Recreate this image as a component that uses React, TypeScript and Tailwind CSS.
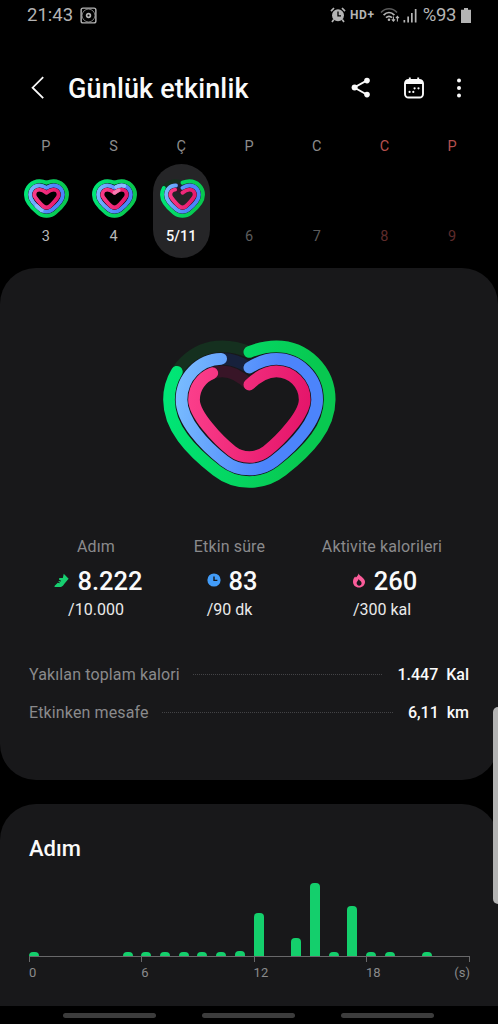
import { useId } from "react";

type Tail = { from: number; length: number };

type Day = {
  letter: string;
  date: string;
  fill?: number[];
  tails?: (Tail | null)[];
  selected?: boolean;
  weekend?: boolean;
};

const DAYS: Day[] = [
  { letter: "P", date: "3", fill: [100, 100, 100], tails: [null, { from: 55, length: 7 }, null] },
  { letter: "S", date: "4", fill: [100, 100, 100], tails: [null, { from: 2, length: 9 }, { from: 0, length: 7 }] },
  { letter: "Ç", date: "5/11", fill: [82, 92, 87], selected: true },
  { letter: "P", date: "6" },
  { letter: "C", date: "7" },
  { letter: "C", date: "8", weekend: true },
  { letter: "P", date: "9", weekend: true },
];

// bar height in px for every hour of the day
const STEPS = [4, 0, 0, 0, 0, 4, 4, 4, 4, 4, 4, 5, 43, 0, 18, 73, 4, 50, 4, 4, 0, 4, 0, 0];

const BIG = [
  { r: 160, start: 80 },
  { r: 122.5, start: 127 },
  { r: 85, start: 178 },
];
const SMALL = [
  { r: 155, start: 84 },
  { r: 107, start: 143 },
  { r: 59, start: 200 },
];

const TRACKS = ["#15301f", "#17213c", "#381527"];
const FROM = ["#00e676", "#7cc0ff", "#ff4590"];
const TO = ["#08c850", "#4c84fb", "#e4156a"];
const LIGHT = ["#5cf0a4", "#86bdff", "#f77bb0"];

function heartPath({ r, start }: { r: number; start: number }) {
  const top = 223 - r;
  const lift = start - (start - top) * 0.58;
  // where the slanted sides meet the round bottom
  const dx = 0.616 * r;
  const dy = 310 + 0.788 * r;
  const side = 223 + 0.52 * r;
  const cx = dx + 0.5 * r;
  const cy = dy - 0.391 * r;
  return [
    `M298 ${start}`,
    `C322 ${lift} 350 ${top} 379 ${top}`,
    `A${r} ${r} 0 0 1 ${379 + r} 223`,
    `C${379 + r} ${side} ${298 + cx} ${cy} ${298 + dx} ${dy}`,
    `A${r} ${r} 0 0 1 ${298 - dx} ${dy}`,
    `C${298 - cx} ${cy} ${217 - r} ${side} ${217 - r} 223`,
    `A${r} ${r} 0 0 1 217 ${top}`,
    `C246 ${top} 274 ${lift} 298 ${start}`,
  ].join(" ");
}

type HeartProps = { fill: number[]; tails?: (Tail | null)[]; small?: boolean; className: string };

function Heart({ fill, tails, small, className }: HeartProps) {
  const id = useId();
  const rings = small ? SMALL : BIG;
  const stroke = small ? 45 : 35;
  return (
    <svg viewBox="39 44 518 444" className={className} fill="none" strokeWidth={stroke} strokeLinecap="round">
      {rings.map((ring, i) => {
        const tail = tails?.[i];
        return (
          <g key={i}>
            <linearGradient id={id + i} gradientUnits="userSpaceOnUse" x1="60" y1="170" x2="480" y2="240">
              <stop offset="0" stopColor={FROM[i]} />
              <stop offset={i === 1 ? "0.75" : "1"} stopColor={TO[i]} />
            </linearGradient>
            <path d={heartPath(ring)} stroke={TRACKS[i]} strokeLinecap="butt" />
            <path
              d={heartPath(ring)}
              stroke={`url(#${id + i})`}
              pathLength={100}
              strokeDasharray={fill[i] < 100 ? `${fill[i]} 200` : undefined}
            />
            {tail && (
              <path
                d={heartPath(ring)}
                stroke={LIGHT[i]}
                pathLength={100}
                strokeDasharray={`${tail.length} 200`}
                strokeDashoffset={-tail.from}
              />
            )}
          </g>
        );
      })}
    </svg>
  );
}

function StatusBar() {
  return (
    <div className="flex h-[30px] items-center pl-[27px] pr-[27px] text-[#b4b4b4]">
      <span className="text-[18.5px] leading-none">21:43</span>
      <svg viewBox="0 0 18 18" className="ml-[7px] h-[17px] w-[17px]" fill="none" stroke="currentColor" strokeWidth="1.5">
        <rect x="1.2" y="1.2" width="15.6" height="15.6" rx="2" />
        <circle cx="9" cy="9" r="6.8" strokeWidth="1" opacity=".7" />
        <circle cx="9" cy="9" r="2" strokeWidth="1.8" />
      </svg>
      <div className="flex-1" />
      <svg viewBox="0 0 16 16" className="h-[16px] w-[16px]">
        <circle cx="8" cy="8.3" r="6" fill="currentColor" />
        <path d="M1 4.2L4 1M15 4.2L12 1M3.8 12.5L2 15M12.2 12.5L14 15" stroke="currentColor" strokeWidth="1.7" />
        <path d="M8 4.5V8.8H11" fill="none" stroke="#000" strokeWidth="1.3" />
      </svg>
      <span className="ml-[4px] text-[12px] leading-none font-bold tracking-[0.7px]">HD+</span>
      <svg viewBox="0 0 20 16" className="ml-[5px] h-[16px] w-[20px]" fill="none" stroke="currentColor">
        <path d="M1 5.5C5.5 .6 12.5 .6 17 5.5" strokeWidth="1.5" opacity=".5" />
        <path d="M3.6 8.2C7 4.6 11 4.6 14.4 8.2" strokeWidth="1.7" />
        <path d="M6 10.7C8 8.8 10 8.8 12 10.7" strokeWidth="1.7" />
        <circle cx="9" cy="12.8" r="1.3" fill="currentColor" stroke="none" />
        <path d="M13.4 9.5V14M11.8 12.4L13.4 14.2L15 12.4M17.4 14.5V9.8M15.9 11.2L17.4 9.4L18.9 11.2" strokeWidth="1.1" />
      </svg>
      <svg viewBox="0 0 14 15" className="ml-[3px] h-[15px] w-[14px]" fill="currentColor">
        <path d="M.5 12H2.2V14.5H.5zM4.3 8.5H6V14.5H4.3zM8 5H9.7V14.5H8zM11.8 1H13.5V14.5H11.8z" />
      </svg>
      <span className="ml-[6px] text-[18.5px] leading-none tracking-[-0.4px]">%93</span>
      <svg viewBox="0 0 10 15" className="ml-[5px] h-[15px] w-[10px]" fill="currentColor">
        <path d="M3 0H7V1.8H10V15H0V1.8H3z" />
      </svg>
    </div>
  );
}

function Header() {
  return (
    <header className="flex h-[116px] items-center pl-[31px] pr-[36px] text-[#fafafa]">
      <svg viewBox="0 0 14 24" className="h-[24px] w-[14px]" fill="none" stroke="currentColor" strokeWidth="1.8">
        <path d="M12.2 1.2L1.6 11.7L12.2 22.2" />
      </svg>
      <h1 className="ml-[23px] pt-[2px] text-[27px] leading-none font-medium tracking-[0.15px]">Günlük etkinlik</h1>
      <div className="flex-1" />
      <svg viewBox="0 0 20 22" className="h-[22px] w-[20px]" fill="currentColor">
        <path d="M16.5 3.2L3.3 10.5L16.5 18" fill="none" stroke="currentColor" strokeWidth="1.9" />
        <circle cx="16" cy="3.6" r="2.8" />
        <circle cx="3.6" cy="10.5" r="3" />
        <circle cx="16" cy="17.6" r="2.8" />
      </svg>
      <svg viewBox="0 0 22 22" className="ml-[32px] h-[22px] w-[22px]" fill="none" stroke="currentColor">
        <rect x="2" y="3" width="18" height="17.5" rx="3.5" strokeWidth="1.9" />
        <path d="M2 5.5C2 4 3 3 5 3H17C19 3 20 4 20 5.5V7H2z" fill="currentColor" stroke="none" />
        <path d="M6.8 .5V4M15.2 .5V4" strokeWidth="1.9" />
        <g fill="currentColor" stroke="none">
          <circle cx="11.6" cy="11.3" r="1.1" />
          <circle cx="15.5" cy="11.3" r="1.1" />
          <circle cx="6.6" cy="14.9" r="1.1" />
          <circle cx="10.3" cy="14.9" r="1.1" />
        </g>
      </svg>
      <svg viewBox="0 0 6 20" className="ml-[31px] h-[20px] w-[6px]" fill="currentColor">
        <circle cx="3" cy="2.4" r="2" />
        <circle cx="3" cy="10" r="2" />
        <circle cx="3" cy="17.6" r="2" />
      </svg>
    </header>
  );
}

function WeekStrip() {
  return (
    <div className="grid h-[132px] grid-cols-7 px-3 pt-[9px]">
      {DAYS.map((d) => (
        <div key={d.date} className="-mt-[16px] flex flex-col items-center">
          <span className={`text-[14.5px] leading-4 ${d.weekend ? "text-[#b5504f]" : "text-[#8c8c8c]"}`}>{d.letter}</span>
          <div
            className={`mt-[9px] flex h-[94px] w-[57px] flex-col items-center rounded-full pt-[14px] ${
              d.selected ? "bg-[#252527]" : ""
            }`}
          >
            {d.fill ? (
              <Heart small fill={d.fill} tails={d.tails} className="ml-[2px] h-[41px] w-[45px]" />
            ) : (
              <div className="h-[41px]" />
            )}
            <span
              className={`mt-[10px] text-[14.5px] leading-4 whitespace-nowrap ${
                d.selected
                  ? "font-medium text-[#fafafa]"
                  : d.fill
                    ? "text-[#b8b8b8]"
                    : d.weekend
                      ? "text-[#5e2b2b]"
                      : "text-[#5c5c5c]"
              }`}
            >
              {d.date}
            </span>
          </div>
        </div>
      ))}
    </div>
  );
}

function ShoeIcon() {
  return (
    <svg viewBox="0 0 16 16" className="h-[15px] w-[15px]">
      <path
        d="M10.4 .8L15.6 6L12.4 9.8C10 12.6 9.2 15 6 15H1.2C.4 15 .3 14 1 13.3L4 10.4L5.8 10.9L6.2 10.2L4.7 9.4L5.1 8.5L7.2 9L7.6 8.2L5.4 7.2L5.6 5.2H9.4z"
        fill="#17cf70"
      />
    </svg>
  );
}

function ClockIcon() {
  return (
    <svg viewBox="0 0 14 14" className="h-[14px] w-[14px]">
      <circle cx="7" cy="7" r="6.6" fill="#429cf8" />
      <path d="M7 3.5V7.4H10.4" fill="none" stroke="#17171b" strokeWidth="1.4" />
    </svg>
  );
}

function FlameIcon() {
  return (
    <svg viewBox="0 0 14 15" className="h-[15px] w-[14px]">
      <path
        d="M6.4 .5C6.5 2.4 4.8 3.4 3.9 4.4L3.2 3.5C1.5 5.2 1 7 1 8.7C1 12 3.6 14.5 7 14.5S13 12 13 8.7C13 5.2 8.5 3.8 6.4 .5z"
        fill="#fb5c9a"
      />
      <path d="M6.5 5.9C6.6 7.4 4.6 8.1 4.6 10.1C4.6 11.6 5.7 12.7 7.1 12.7S9.6 11.6 9.6 10.2C9.6 8.3 7.7 7.7 6.5 5.9z" fill="#17171b" />
    </svg>
  );
}

type StatProps = { label: string; icon: React.ReactNode; value: string; goal: string; className: string };

function Stat({ label, icon, value, goal, className }: StatProps) {
  return (
    <div className={`flex flex-col items-center ${className}`}>
      <span className="text-[16px] leading-5 tracking-[0.13px] whitespace-nowrap text-[#8a8a8c]">{label}</span>
      <div className="mt-[9px] flex h-[30px] items-center gap-[8px] pl-[5px]">
        <span className="-mt-[2px]">{icon}</span>
        <span className="text-[25.5px] leading-[30px] font-medium text-[#fafafa]">{value}</span>
      </div>
      <span className="mt-[4px] text-[16px] leading-5 text-[#eaeaea]">{goal}</span>
    </div>
  );
}

function Row({ label, value, unit }: { label: string; value: string; unit: string }) {
  return (
    <div className="flex h-[38px] items-center">
      <span className="text-[16px] tracking-[0.13px] text-[#8a8a8c]">{label}</span>
      <div className="-mt-[2px] mr-[15px] ml-[13px] flex-1 border-t border-dotted border-[#434346]" />
      <span className="text-[16px] font-medium whitespace-pre text-[#fafafa]">
        {value}
        {"  "}
        {unit}
      </span>
    </div>
  );
}

function StepsChart() {
  return (
    <div className="mt-[19px] w-[441px]">
      <div className="flex h-[74px] items-end overflow-hidden">
        {STEPS.map((h, i) => (
          <div key={i} className="w-[18.72px] shrink-0">
            <div className="w-[10px] rounded-t-[4px] bg-[#14cf6c]" style={{ height: h }} />
          </div>
        ))}
      </div>
      <div className="flex h-[6px] border-t border-r border-[#68686a]">
        <div className="w-[112.3px] border-l border-[#68686a]" />
        <div className="w-[112.3px] border-l border-[#68686a]" />
        <div className="w-[112.3px] border-l border-[#68686a]" />
        <div className="flex-1 border-l border-[#68686a]" />
      </div>
      <div className="mt-px flex text-[13px] leading-5 text-[#8a8a8c]">
        <span className="w-[112.3px]">0</span>
        <span className="w-[112.3px]">6</span>
        <span className="w-[112.3px]">12</span>
        <span className="flex-1">18</span>
        <span>(s)</span>
      </div>
    </div>
  );
}

export default function App() {
  return (
    <div className="relative flex h-[1024px] w-[498px] flex-col overflow-hidden bg-black font-['Roboto',sans-serif]">
      <StatusBar />
      <Header />
      <WeekStrip />
      <section className="-mt-[10px] flex h-[512px] shrink-0 flex-col rounded-[36px] bg-[#18181a] pt-[72px]">
        <Heart fill={[82.5, 92.3, 87]} className="ml-[163px] h-[148px] w-[172.7px]" />
        <div className="mt-[49px] flex">
          <Stat className="ml-[29px] w-[134px]" label="Adım" icon={<ShoeIcon />} value="8.222" goal="/10.000" />
          <Stat className="w-[133px]" label="Etkin süre" icon={<ClockIcon />} value="83" goal="/90 dk" />
          <Stat className="ml-[19px] w-[134px]" label="Aktivite kalorileri" icon={<FlameIcon />} value="260" goal="/300 kal" />
        </div>
        <div className="mt-[36px] px-[29px]">
          <Row label="Yakılan toplam kalori" value="1.447" unit="Kal" />
          <Row label="Etkinken mesafe" value="6,11" unit="km" />
        </div>
      </section>
      <section className="mt-[24px] h-[202px] shrink-0 rounded-t-[36px] bg-[#18181a] px-[29px] pt-[31px]">
        <h2 className="text-[22px] leading-7 font-medium text-[#fafafa]">Adım</h2>
        <StepsChart />
      </section>
      <nav className="flex h-[18px] shrink-0 items-center gap-[46px] bg-black pl-[63px]">
        <div className="h-[5px] w-[93px] rounded-full bg-[#3c3c3c]" />
        <div className="h-[5px] w-[93px] rounded-full bg-[#3c3c3c]" />
        <div className="h-[5px] w-[93px] rounded-full bg-[#3c3c3c]" />
      </nav>
      {/* edge panel handle */}
      <div className="absolute top-[707px] right-0 h-[197px] w-[5px] rounded-l-[5px] bg-[#b4b4b4]" />
    </div>
  );
}
